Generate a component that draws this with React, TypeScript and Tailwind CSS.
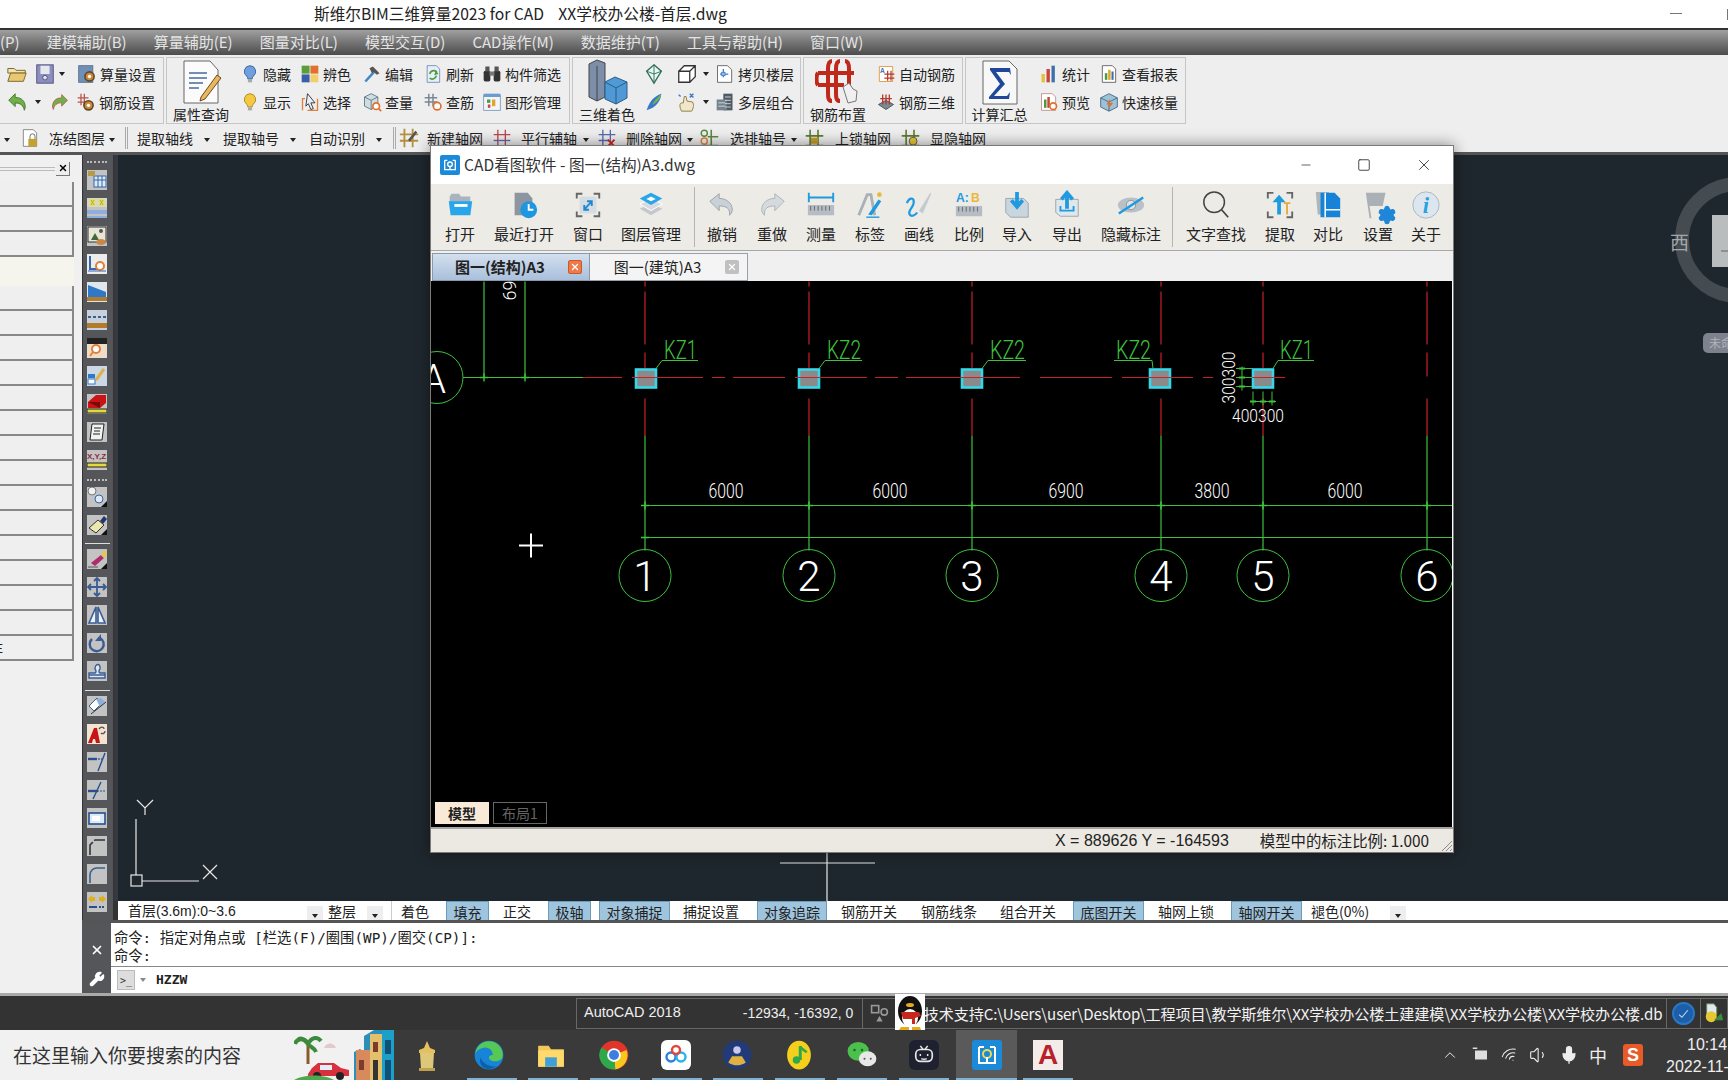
import type { ReactNode } from "react";
import { ChevronUp, Mic, Minus, Settings, Square, Volume1, Wifi, Wrench, X } from "lucide-react";

const cjk = "font-['Noto_Sans_CJK_SC','Liberation_Sans',sans-serif]";

const Ico = ({ c = "w-5 h-5", v = "0 0 24 24", children }: { c?: string; v?: string; children: ReactNode }) => (
  <svg viewBox={v} className={`${c} shrink-0`}>
    {children}
  </svg>
);

const Arrow = () => <span className="inline-block align-middle w-0 h-0 border-x-[3px] border-x-transparent border-t-[4px] border-t-[#222] shrink-0" />;

// small ribbon icons
const ribbon: Record<string, ReactNode> = {
  folder: (<><path d="M2 6h7l2 2h10v3H2z" fill="#f5e3a8" stroke="#75602a" /><path d="M2 20l3-9h17l-3 9z" fill="#e8c873" stroke="#75602a" /></>),
  save: (<><rect x="3" y="2" width="18" height="20" fill="#8c8fbd" stroke="#4d4f7a" /><rect x="7" y="3" width="10" height="9" fill="#e6e6ee" /><circle cx="12" cy="16" r="2.5" fill="#e6e6ee" stroke="#4d4f7a" /></>),
  gearDoc: (<><rect x="2" y="2" width="17" height="20" fill="#6f8fb8" stroke="#5b6d88" /><circle cx="15" cy="15" r="5.5" fill="#d0883a" stroke="#5f4a28" strokeWidth="2" /><circle cx="15" cy="15" r="2" fill="#fff" /></>),
  undo: (<path d="M3 10l7-7v4c7 0 11 4 11 11l-1 3c-1-5-4-8-10-8v4z" fill="#6fb04a" stroke="#3f7428" />),
  redo: (<path d="M21 10l-7-7v4c-7 0-11 4-11 11l1 3c1-5 4-8 10-8v4z" fill="#6fb04a" stroke="#c0463a" strokeWidth=".8" />),
  rebarGear: (<><path d="M6 2v14M10 2v14M2 7h13M2 12h13" stroke="#b5544a" strokeWidth="1.5" /><circle cx="15" cy="16" r="5.5" fill="#d0883a" stroke="#5f4a28" strokeWidth="2" /><circle cx="15" cy="16" r="2" fill="#fff" /></>),
  bulbBlue: (<><path d="M12 2a7 7 0 0 1 4 12.6c-1 1-1.4 2.4-1.4 3.4h-5.2c0-1-.4-2.4-1.4-3.4A7 7 0 0 1 12 2z" fill="#6f9fdc" stroke="#345a94" /><rect x="9.5" y="18.5" width="5" height="3.5" fill="#aaa" /></>),
  bulbYellow: (<><path d="M12 2a7 7 0 0 1 4 12.6c-1 1-1.4 2.4-1.4 3.4h-5.2c0-1-.4-2.4-1.4-3.4A7 7 0 0 1 12 2z" fill="#f5c842" stroke="#a5801c" /><rect x="9.5" y="18.5" width="5" height="3.5" fill="#aaa" /></>),
  palette: (<><rect x="2" y="2" width="9.5" height="9.5" fill="#5a9e3c" /><rect x="12.5" y="2" width="9.5" height="9.5" fill="#e0702c" /><rect x="2" y="12.5" width="9.5" height="9.5" fill="#3a5fa8" /><rect x="12.5" y="12.5" width="9.5" height="9.5" fill="#f2cf6a" /></>),
  hammer: (<><path d="M4 21L14 10" stroke="#3d88c8" strokeWidth="3" /><path d="M9 5l4-2 8 8-3 2-4-3-2 1z" fill="#555" /></>),
  refresh: (<><path d="M5 2h11l4 4v16H5z" fill="#e7eefa" stroke="#6b84ad" /><path d="M8 12a5 5 0 0 1 8-3l-1 3 3-1M16 14a5 5 0 0 1-8 3" fill="none" stroke="#4f9a3c" strokeWidth="2" /></>),
  binoc: (<><rect x="2" y="8" width="8" height="13" rx="2" fill="#333" /><rect x="14" y="8" width="8" height="13" rx="2" fill="#333" /><rect x="4" y="3" width="5" height="6" fill="#555" /><rect x="15" y="3" width="5" height="6" fill="#555" /><rect x="9" y="9" width="6" height="5" fill="#777" /></>),
  select: (<><path d="M3 22V8h3M21 8v14H9" fill="none" stroke="#e0803a" strokeWidth="1.6" /><path d="M9 2l9 11h-5l3 7-3 1-3-7-3 3z" fill="#e8eef6" stroke="#222" /></>),
  boxQ: (<><path d="M3 6l8-4 8 4v11l-8 4-8-4z" fill="#cfdde2" stroke="#56707c" /><path d="M3 6l8 4 8-4M11 10v11" stroke="#56707c" fill="none" /><circle cx="17" cy="17" r="4" fill="#fff" stroke="#e0702c" strokeWidth="2" /><path d="M20 20l3 3" stroke="#e0702c" strokeWidth="2" /></>),
  rebarQ: (<><path d="M7 2v15M12 2v15M2 7h15M2 12h15" stroke="#7a8796" strokeWidth="1.8" /><circle cx="17" cy="17" r="4.5" fill="#fff" stroke="#e0702c" strokeWidth="2" /></>),
  chart: (<><rect x="2" y="4" width="20" height="18" fill="#f2f5fa" stroke="#7a95b8" /><rect x="2" y="2" width="20" height="4" fill="#6c9bd0" /><rect x="6" y="9" width="4" height="4" fill="#4f9a3c" /><rect x="12" y="9" width="4" height="8" fill="#e0a52c" /><rect x="7" y="15" width="3" height="4" fill="#c8463a" /></>),
  copyFloor: (<><path d="M3 2h12l5 5v15H3z" fill="#fff" stroke="#555" /><path d="M10 6v10M6 12h10" stroke="#3d78c8" strokeWidth="1.5" /><rect x="8" y="10" width="4" height="4" fill="#9cc2ec" stroke="#3d78c8" /></>),
  building: (<><rect x="10" y="2" width="11" height="20" fill="#4d5a63" /><rect x="2" y="9" width="12" height="13" fill="#74838c" /><path d="M12 6h7M12 10h7M12 14h7M12 18h7M4 13h8M4 17h8" stroke="#dfe5e8" /></>),
  autoRebar: (<><path d="M4 3h16v18H4z" fill="#fff" stroke="#e0902c" /><path d="M14 8v12M18 8v12M10 12h12M10 17h12" stroke="#b5382c" strokeWidth="1.5" /><text x="5" y="11" fontSize="8" fontWeight="700" fill="#2f6fb5">A</text></>),
  rebar3d: (<><path d="M3 15l9-5 9 5-9 6z" fill="#7a8a96" stroke="#444" /><path d="M8 3v12M12 3v12M16 3v12M5 8h14" stroke="#b5382c" strokeWidth="1.6" /></>),
  bars: (<><rect x="3" y="12" width="4" height="10" fill="#e3c23c" /><rect x="9" y="6" width="4" height="16" fill="#c8463a" /><rect x="15" y="2" width="4" height="20" fill="#3c6fae" /></>),
  report: (<><path d="M4 2h12l4 4v16H4z" fill="#fff" stroke="#555" /><rect x="7" y="11" width="3" height="8" fill="#4f9a3c" /><rect x="11" y="7" width="3" height="12" fill="#e0a52c" /><rect x="15" y="9" width="2.5" height="10" fill="#3c6fae" /></>),
  preview: (<><path d="M3 2h13l4 4v16H3z" fill="#fff" stroke="#b88" /><rect x="6" y="9" width="3" height="10" fill="#4f9a3c" /><rect x="10" y="6" width="3" height="13" fill="#c8463a" /><circle cx="17" cy="17" r="4" fill="#fff" stroke="#e0702c" strokeWidth="2" /></>),
  quick: (<><path d="M2 7l10-5 10 5v11l-10 5-10-5z" fill="#9cc2d8" stroke="#3d6178" /><path d="M2 7l10 5 10-5M12 12v11" fill="none" stroke="#3d6178" /><path d="M13 8l-4 7h4l-2 6 6-8h-4z" fill="#e0702c" /></>),
  gem: (<><path d="M12 2l8 7-8 13-8-13z" fill="#eaf6f2" stroke="#30705c" strokeWidth="1.5" /><path d="M4 9l8 3 8-3M12 2v20" stroke="#30705c" fill="none" /></>),
  cubeLine: (<><path d="M3 9h12v12H3zM3 9l6-6h12v12l-6 6M15 9l6-6" fill="#fff" stroke="#333" strokeWidth="1.4" /></>),
  orbit: (<><path d="M4 21c3-10 8-15 16-18-1 9-6 15-16 18z" fill="#3d78c8" /><path d="M10 15c2-4 5-7 10-12-1 5-4 9-10 12z" fill="#6dbb3c" /></>),
  hand: (<><path d="M6 22c-3-6-2-10 2-9l1-7 2 0 1 5 6 1c2 3 1 7-1 10z" fill="#f0e6c8" stroke="#8a7a4a" /><path d="M3 4l2 2M15 3l4 4M19 3l-4 4" stroke="#3d78c8" strokeWidth="1.5" /></>),
};

const RibItem = ({ i, t, c = "" }: { i: string; t: string; c?: string }) => (
  <div className={`flex items-center gap-[3px] ${c}`}>
    <Ico>{ribbon[i]}</Ico>
    <span>{t}</span>
  </div>
);

const Group = ({ c, children }: { c: string; children: ReactNode }) => (
  <div className={`flex h-[67px] border border-[#c6c6c6] mr-[2px] shrink-0 ${c}`}>{children}</div>
);

const Big = ({ t, c, children }: { t: string; c: string; children: ReactNode }) => (
  <div className={`flex flex-col items-center shrink-0 ${c}`}>
    <div className="h-[48px] flex items-center justify-center">{children}</div>
    <span className="leading-[16px]">{t}</span>
  </div>
);

const Rows = ({ children }: { children: ReactNode }) => <div className="flex flex-col justify-center gap-[7px] pb-[5px] [&>div]:h-[21px] [&>div]:flex [&>div]:items-center">{children}</div>;

const axes = [645, 809, 972, 1161, 1263, 1427];
const bubbles = ["1", "2", "3", "4", "5", "6"];
const columns = [635, 798, 961, 1149, 1252];
const dims = [["6000", 726], ["6000", 890], ["6900", 1066], ["3800", 1212], ["6000", 1345]] as const;
const kz = [
  ["KZ1", 663, 698, 656],
  ["KZ2", 826, 862, 819],
  ["KZ2", 989, 1026, 982],
  ["KZ2", 1115, 1152, 1150],
  ["KZ1", 1279, 1314, 1273],
] as const;
const red = "#c8202c";
const green = "#3ec23e";
const thin = "font-['Roboto','Liberation_Sans',sans-serif] font-light";

function Drawing() {
  return (
    <svg viewBox="431 281 1021 545" className="w-full h-full block">
      {/* axes */}
      {axes.map((x) => (
        <g key={x}>
          <path d={`M${x} 281V286M${x} 291V344M${x} 352V${x === 1427 ? 376 : 368}`} stroke={red} strokeWidth="1.2" />
          <path d={`M${x} 398V435`} stroke={red} strokeWidth="1.2" />
          <path d={`M${x} 435V550`} stroke={green} strokeWidth="1.2" />
          <circle cx={x} cy="575" r="26" fill="none" stroke={green} strokeWidth="1" />
          <path d={`M${x - 4} 505h8M${x} 501v8`} stroke={green} strokeWidth="1.6" />
        </g>
      ))}
      <path d="M583 377H622M632 377H703M712 377H725M733 377H785M795 377H867M875 377H898M906 377H1020M1040 377H1112M1122 377H1147M1172 377H1193M1203 377H1213M1240 377H1285" stroke={red} strokeWidth="1.1" />
      {/* left axis A */}
      <path d="M463 377H583M484 281V377M525 281V377" stroke={green} strokeWidth="1.2" />
      <path d="M480 377h8M521 377h8M484 373v8M525 373v8" stroke={green} strokeWidth="1.4" />
      <circle cx="437" cy="377" r="26" fill="none" stroke={green} />
      <text x="421" y="392" className={thin} fontSize="40" fill="#fff">A</text>
      <text transform="translate(516 300) rotate(-90)" className={thin} fontSize="18" fill="#fff">69</text>
      {/* dimension lines */}
      <path d="M645 505H1452M645 537H1452" stroke={green} strokeWidth="1.2" />
      <path d="M641 537h8" stroke={green} strokeWidth="1.6" />
      {dims.map(([t, x], i) => (
        <text key={i} x={x} y="497" textAnchor="middle" className={thin} fontSize="20" textLength="35" lengthAdjust="spacingAndGlyphs" fill="#fff">{t}</text>
      ))}
      {bubbles.map((t, i) => (
        <text key={t} x={axes[i]} y="590" textAnchor="middle" className={thin} fontSize="42" fill="#fff">{t}</text>
      ))}
      {/* columns */}
      {columns.map((x) => (
        <g key={x}>
          <rect x={x + 1} y="369" width="20" height="18" fill="#8a8a8a" stroke="#35d8ea" strokeWidth="2.6" />
          <path d={`M${x - 3} 377h28`} stroke={red} strokeWidth="1" />
        </g>
      ))}
      {kz.map(([t, a, b, l]) => (
        <g key={a}>
          <text x={a + 1} y="358" className={thin} fontSize="25" textLength={b - a - 2} lengthAdjust="spacingAndGlyphs" fill={green}>{t}</text>
          <path d={t === "KZ2" && a === 1115 ? `M${a - 1} 360H${b}L${l + 3} 368` : `M${l} 368L${a - 1} 360H${b}`} stroke={green} fill="none" />
        </g>
      ))}
      {/* column 5 small dims */}
      <path d="M1242 366V390M1236 368h16M1236 377h16M1236 386h16M1253 391V405M1263 391V405M1272 391V405M1250 401H1276" stroke={green} strokeWidth="1" />
      <path d="M1239 368h6M1239 377h6M1239 386h6M1250 401h6M1260 401h6M1269 401h6" stroke={green} strokeWidth="2" />
      <text x="1232" y="421" className={thin} fontSize="19" textLength="52" lengthAdjust="spacingAndGlyphs" fill="#fff">400300</text>
      <text transform="translate(1235 403) rotate(-90)" className={thin} fontSize="19" textLength="52" lengthAdjust="spacingAndGlyphs" fill="#fff">300300</text>
      {/* cursor */}
      <path d="M519 545H543M531 533V557" stroke="#fff" strokeWidth="2" />
    </svg>
  );
}

// CAD viewer toolbar
const viewerTools: { t: string; w: string; sep?: boolean; i: ReactNode }[] = [
  { t: "打开", w: "w-[58px]", i: (<><path d="M5 7l2-3h8l2 3h10v6H5z" fill="#a9b4bf" /><path d="M4 12h25l-2 15H6z" fill="#27a6ec" /><rect x="10" y="15" width="14" height="3" fill="#fff" /></>) },
  { t: "最近打开", w: "w-[70px]", i: (<><path d="M6 3h14l5 6v18H6z" fill="#8d96a0" /><circle cx="21" cy="21" r="9" fill="#1f96e0" /><path d="M21 15v6h5" stroke="#fff" strokeWidth="2" fill="none" /></>) },
  { t: "窗口", w: "w-[58px]", i: (<><path d="M4 9V4h6M22 4h6v5M28 23v5h-6M10 28H4v-5" stroke="#666" strokeWidth="2" fill="none" /><rect x="7" y="7" width="18" height="18" fill="#d6dde2" /><path d="M12 21l8-9M15 12h5v5M12 16v5h5" stroke="#1f86d0" strokeWidth="2" fill="none" /></>) },
  { t: "图层管理", w: "w-[68px] mr-[9px]", sep: true, i: (<><path d="M16 14l12 6-12 7-12-7z" fill="#c4c8cc" /><path d="M16 9l12 6-12 7-12-7z" fill="#d8dbde" stroke="#fff" /><path d="M16 3l12 6-12 7-12-7z" fill="#29a5e8" /><path d="M16 7l5 2.5-5 2.5-5-2.5z" fill="#fff" /></>) },
  { t: "撤销", w: "w-[52px]", i: (<path d="M3 12L13 4v5c8 0 14 5 14 12 0 3-2 5-3 6 1-7-3-10-11-10v5z" fill="#c9d0d6" stroke="#9aa4ac" />) },
  { t: "重做", w: "w-[48px]", i: (<path d="M29 12L19 4v5c-8 0-14 5-14 12 0 3 2 5 3 6-1-7 3-10 11-10v5z" fill="#d5dade" stroke="#aab2b9" />) },
  { t: "测量", w: "w-[50px]", i: (<><path d="M3 3v10M29 3v10M4 8h24" stroke="#1f9ae0" strokeWidth="2" /><rect x="2" y="16" width="28" height="11" fill="#b5bcc3" /><path d="M5 17v5M9 17v5M13 17v5M17 17v5M21 17v5M25 17v5" stroke="#666" /></>) },
  { t: "标签", w: "w-[48px]", i: (<><path d="M4 27L13 5h4l4 22" fill="none" stroke="#a9b0b6" strokeWidth="3" /><path d="M14 26L25 10l3 2-10 15z" fill="#1f9ae0" /><path d="M12 29h14" stroke="#1f9ae0" strokeWidth="1.5" /><circle cx="26" cy="5" r="2.5" fill="#e8b93c" /></>) },
  { t: "画线", w: "w-[50px]", i: (<><path d="M3 14c3-7 9-6 7 1-2 6-6 7-4 11 2 3 6 1 8-2" fill="none" stroke="#1f9ae0" strokeWidth="2.4" /><path d="M16 22L28 3l1 1-9 21z" fill="#c3cad0" /></>) },
  { t: "比例", w: "w-[50px]", i: (<><text x="2" y="13" fontSize="13" fontWeight="700" fill="#1f9ae0" fontFamily="Liberation Sans">A:</text><text x="18" y="13" fontSize="13" fontWeight="700" fill="#e8b93c" fontFamily="Liberation Sans">B</text><rect x="2" y="17" width="28" height="11" fill="#b5bcc3" /><path d="M5 18v5M9 18v5M13 18v5M17 18v5M21 18v5M25 18v5" stroke="#666" /></>) },
  { t: "导入", w: "w-[46px]", i: (<><path d="M4 9h19l5 5v15H9l-5-5z" fill="#c9d6de" stroke="#9aa4ac" /><path d="M16 2v13M10 11l6 7 6-7" stroke="#1f9ae0" strokeWidth="4" fill="none" /></>) },
  { t: "导出", w: "w-[54px]", i: (<><path d="M4 10h24v18H9l-5-4z" fill="#dfe7ec" stroke="#9aa4ac" /><path d="M16 20V5M10 10l6-7 6 7" stroke="#1f9ae0" strokeWidth="4" fill="none" /><path d="M9 17v5h14v-5" stroke="#1f9ae0" strokeWidth="2" fill="none" /></>) },
  { t: "隐藏标注", w: "w-[74px] mr-[4px]", sep: true, i: (<><ellipse cx="16" cy="16" rx="14" ry="8" fill="#b9c0c6" /><circle cx="16" cy="16" r="5" fill="#dfe3e6" stroke="#8b949b" /><path d="M3 25L29 8" stroke="#1f9ae0" strokeWidth="2.6" /></>) },
  { t: "文字查找", w: "w-[84px]", i: (<><circle cx="14" cy="13" r="11" fill="none" stroke="#444" strokeWidth="1.6" /><path d="M22 21l7 8" stroke="#444" strokeWidth="1.8" /></>) },
  { t: "提取", w: "w-[44px]", i: (<><path d="M3 9V3h6M23 3h6v6M29 23v6h-6M9 29H3v-6" stroke="#666" strokeWidth="2" fill="none" /><path d="M13 26V13H8l7-8 7 8h-5v13z" fill="#1f9ae0" /><path d="M20 14h7M23.5 14v12" stroke="#e8a93c" strokeWidth="2" /></>) },
  { t: "对比", w: "w-[52px]", i: (<><path d="M3 2h14v24H5z" fill="#aeb5bb" /><path d="M8 3h15l6 6v20H8z" fill="#1683d8" /><path d="M13 3v26M13 21h16" stroke="#fff" strokeWidth="1.6" /></>) },
  { t: "设置", w: "w-[48px]", i: (<path d="M3 3h21l-3 14H7l2 13H7z" fill="#a9b0b6" />) },
  { t: "关于", w: "w-[48px]", i: (<><circle cx="16" cy="16" r="14" fill="#dbe6ee" stroke="#a9b6bf" /><text x="16" y="25" textAnchor="middle" fontSize="24" fontStyle="italic" fontWeight="700" fontFamily="Liberation Serif" fill="#2aa0e0">i</text></>) },
];

function Viewer() {
  return (
    <div className={`absolute left-[430px] top-[145px] w-[1024px] h-[708px] flex flex-col bg-white border border-[#7a7a7a] shadow-[0_0_14px_rgba(0,0,0,0.45)] text-[#222] ${cjk}`}>
      <div className="h-[38px] flex items-center pl-[9px] shrink-0">
        <div className="w-[20px] h-[20px] bg-[#1b8ad8] rounded-[2px] flex items-center justify-center">
          <Ico c="w-[16px] h-[16px]"><path d="M4 5h4M16 5h4M4 5v14h16V5" fill="none" stroke="#fff" strokeWidth="2" /><circle cx="12" cy="11" r="3.5" fill="none" stroke="#fff" strokeWidth="2" /><path d="M12 13v5" stroke="#fff" strokeWidth="2" /></Ico>
        </div>
        <span className="ml-[4px] text-[15.6px] text-[#333]">CAD看图软件 - 图一(结构)A3.dwg</span>
        <div className="ml-auto flex items-center text-[#222]">
          <Minus className="w-[14px] h-[14px] mr-[44px]" strokeWidth={1.2} />
          <Square className="w-[14px] h-[14px] mr-[44px]" strokeWidth={1.4} />
          <X className="w-[18px] h-[18px] mr-[20px]" strokeWidth={1.1} />
        </div>
      </div>
      <div className="h-[67px] flex items-stretch bg-[#ecebe6] border-b border-[#a8a8a8] shrink-0">
        {viewerTools.map((b) => (
          <div key={b.t} className="contents">
            <div className={`flex flex-col items-center shrink-0 ${b.w}`}>
              <div className="h-[42px] flex items-center justify-center relative">
                <Ico c="w-[30px] h-[30px]" v="0 0 32 32">{b.i}</Ico>
                {b.t === "设置" && <Settings className="absolute right-[-4px] bottom-[1px] w-[20px] h-[20px] text-[#1f86d8] fill-[#1f86d8]" strokeWidth={2} />}
              </div>
              <span className="text-[15px] leading-[16px]">{b.t}</span>
            </div>
            {b.sep && <div className="w-px bg-[#b5b5b5] my-[3px] h-[60px] shrink-0 mr-[1px]" />}
          </div>
        ))}
      </div>
      <div className="h-[30px] flex items-end bg-[#f0f0f0] pl-[1px] shrink-0">
        <div className="w-[158px] h-[28px] flex items-center justify-center relative border border-[#8b98a8] bg-gradient-to-b from-[#d3e0ef] to-[#a9bfdb] text-[15px] font-bold pr-[22px]">
          图一(结构)A3
          <span className="absolute right-[7px] top-[6px] w-[14px] h-[14px] rounded-[2px] bg-[#ee7a4a] border border-[#c95a2c] flex items-center justify-center"><X className="w-[10px] h-[10px] text-white" strokeWidth={3} /></span>
        </div>
        <div className="w-[158px] h-[28px] flex items-center justify-center relative border border-l-0 border-[#9aa0a8] bg-[#f4f4f4] text-[15px] pr-[22px]">
          图一(建筑)A3
          <span className="absolute right-[8px] top-[6px] w-[14px] h-[14px] rounded-[2px] bg-[#c0c0c0] flex items-center justify-center"><X className="w-[10px] h-[10px] text-white" strokeWidth={3} /></span>
        </div>
      </div>
      <div className="flex-1 relative bg-black overflow-hidden mr-px">
        <Drawing />
        <div className="absolute left-[4px] bottom-[3px] flex gap-[4px] text-[14px]">
          <span className="w-[54px] h-[22px] flex items-center justify-center bg-[#f9ead8] font-bold text-[#222]">模型</span>
          <span className="w-[54px] h-[22px] flex items-center justify-center border border-[#666] text-[#666]">布局1</span>
        </div>
      </div>
      <div className="h-[25px] flex items-center bg-[#ece9e3] border-t-2 border-[#a5a5a5] relative shrink-0 pt-[1px]">
        <span className="ml-[624px] text-[16px] font-['Liberation_Sans',sans-serif]">X = 889626 Y = -164593</span>
        <span className="ml-[31px] text-[15.4px]">模型中的标注比例: 1.000</span>
        <Ico c="w-[14px] h-[14px] absolute right-0 bottom-0" v="0 0 14 14"><path d="M13 3L3 13M13 7L7 13M13 11L11 13" stroke="#8a8a8a" /></Ico>
      </div>
    </div>
  );
}

// vertical tool strip
const T = ({ children }: { children: ReactNode }) => (
  <div className="w-[20px] h-[20px] bg-[#c3c3c3] mb-[8px] shrink-0">
    <Ico c="w-[20px] h-[20px]" v="0 0 20 20">{children}</Ico>
  </div>
);
const blue = "#3a5c94";
const tools1 = [
  (<><rect x="7" y="6" width="12" height="11" fill="#dfe8f4" stroke="#2f68a8" /><path d="M7 10h12M11 6v11M15 6v11" stroke="#2f68a8" /><rect x="1" y="1" width="7" height="5" fill="#b59a4a" /></>),
  (<><rect width="20" height="9" fill="#d8d8c0" /><path d="M4 2l3 5M7 2L4 7M13 2l3 5M16 2l-3 5" stroke="#222" /><rect x="3" y="1" width="5" height="7" fill="#e8e23c" opacity=".7" /><rect x="12" y="1" width="5" height="7" fill="#e8e23c" opacity=".7" /><rect y="12" width="20" height="4" fill="#8eaede" /><rect y="18" width="20" height="2" fill="#8eaede" /></>),
  (<><rect x="1" y="1" width="18" height="15" fill="#e6e6d6" stroke="#333" /><path d="M4 14l4-7 4 7z" fill="#44663c" /><circle cx="14" cy="5" r="2" fill="#555" /><ellipse cx="14" cy="16" rx="5" ry="3" fill="#c9884a" /></>),
  (<><rect width="20" height="20" fill="#ececea" /><path d="M3 2v13h7" stroke="#3566b0" strokeWidth="2" fill="none" /><circle cx="13" cy="12" r="4" fill="#fff" stroke="#e0803a" strokeWidth="2" /><path d="M1 17h18" stroke="#3566b0" /></>),
  (<><rect width="20" height="20" fill="#dfe6ee" /><path d="M1 3l18 7v5H1z" fill="#2f78c8" /><rect y="15" width="20" height="4" fill="#b07c2c" /></>),
  (<><rect width="20" height="20" fill="#c9d2dc" /><path d="M1 7h18" stroke="#36608f" strokeWidth="2" strokeDasharray="3 2" /><rect y="13" width="20" height="5" fill="#b07c2c" /></>),
  (<><rect width="20" height="20" fill="#ecdcc8" /><rect width="20" height="6" fill="#222" /><circle cx="9" cy="11" r="4" fill="#fff" stroke="#e0803a" strokeWidth="2" /><path d="M6 14l-3 4" stroke="#e0803a" strokeWidth="2" /></>),
  (<><rect width="20" height="20" fill="#cdd8e6" /><rect x="1" y="8" width="7" height="4" fill="#2f78c8" /><rect x="1" y="13" width="7" height="5" fill="#fff" stroke="#2f78c8" /><path d="M9 14l8-11" stroke="#e0b04a" strokeWidth="3" /></>),
  (<><path d="M1 8l8-7h10v8l-6 5H1z" fill="#c81414" /><path d="M1 8h12v6" fill="#7a0a0a" /><rect y="15" width="20" height="4" fill="#e4d83c" stroke="#222" /></>),
  (<path d="M5 2h12l-2 16H3zM7 6h7M7 9h6M6 12h7" fill="#f2f2f2" stroke="#222" />),
  (<><text x="0" y="9" fontSize="8" fontWeight="700" fontFamily="Liberation Sans" fill="#8a2a3a">X,Y,Z</text><rect y="13" width="20" height="4" fill="#e4d83c" stroke="#222" /></>),
];
const tools2a = [
  (<><circle cx="5" cy="4" r="4" fill="#f0f0f0" stroke="#777" /><circle cx="12" cy="12" r="4" fill="#dfe8f4" stroke="#2f68a8" /><path d="M14 20l6-6v6z" fill="#111" /></>),
  (<><path d="M2 13L11 5l6 5-8 8z" fill="#ece8b0" stroke="#333" /><path d="M13 6l4-5 3 3-4 5z" fill="#27356e" /><path d="M14 20l6-6v6z" fill="#111" /></>),
];
const tools3 = [
  (<><path d="M4 14L14 6l3 3-9 8z" fill="#b02c6c" /><path d="M14 6l4-5 2 3-3 5z" fill="#e8c84a" /><path d="M1 18h10" stroke="#555" /><path d="M14 20l6-6v6z" fill="#111" /></>),
  (<path d="M10 1v18M1 10h18M7 4l3-3 3 3M7 16l3 3 3-3M4 7l-3 3 3 3M16 7l3 3-3 3" stroke={blue} strokeWidth="1.8" fill="none" />),
  (<path d="M9 2v16H2zM11 2v16h7z" fill="#eef2f8" stroke={blue} strokeWidth="1.6" />),
  (<><path d="M5 6a7 7 0 1 0 8-1" fill="none" stroke={blue} strokeWidth="2.4" /><path d="M14 1v7H8z" fill={blue} /></>),
  (<path d="M2 17v-5h5c3 0 2-3 1-4 0-6 6-6 5 0-1 1-2 4 1 4h4v5zM2 14h16" fill="#dfe8f4" stroke={blue} strokeWidth="1.4" />),
];
const tools4 = [
  (<><path d="M2 10l8-8 5 5-8 8z" fill="#fff" stroke="#36608f" /><path d="M9 3l5-1 4 4-5 5z" fill="#8eaede" /><path d="M4 18L19 6" stroke="#333" /></>),
  (<><rect width="20" height="20" fill="#f2e4d0" /><path d="M1 19l6-15h3l3 15h-4l-1-4H6l-1 4z" fill="#c81414" /><path d="M12 5c2-3 5-2 5 0M18 7c0 3-3 3-4 2" stroke="#555" strokeWidth="1.4" fill="none" /></>),
  (<><path d="M1 7h9" stroke="#27508c" strokeWidth="2.4" /><path d="M11 7h4" stroke="#5a7cb0" strokeDasharray="2 1" strokeWidth="2" /><path d="M18 1L11 19" stroke="#27508c" strokeWidth="1.4" /></>),
  (<><path d="M1 11h18" stroke="#27508c" strokeWidth="1" strokeDasharray="2 1" /><path d="M1 11h10" stroke="#27508c" strokeWidth="2.4" /><path d="M14 2L6 19" stroke="#27508c" strokeWidth="1.4" /></>),
  (<><rect x="2" y="5" width="16" height="11" fill="#dbe8f6" stroke="#27508c" strokeWidth="1.6" /><path d="M5 8h8v5H5z" fill="#fff" /></>),
  (<path d="M3 19V9l5-5h10" fill="none" stroke="#333" strokeWidth="1.6" strokeDasharray="14 2" />),
  (<path d="M3 19V11c0-4 3-7 7-7h8" fill="none" stroke="#36608f" strokeWidth="1.6" />),
  (<><path d="M1 7l4-4v2h3v4H5v2zM19 7l-4-4v2h-3v4h3v2z" fill="#e0b01c" /><path d="M2 15h8" stroke="#27508c" strokeWidth="2" /><path d="M12 15h6" stroke="#27508c" strokeWidth="2" strokeDasharray="2 1" /></>),
];

const Grip = () => <div className="w-[20px] h-[3px] mb-[3px] border-t-2 border-dotted border-[#bbb]" />;
const Rule = () => <div className="w-[25px] h-px bg-[#ddd] mb-[6px] ml-[-2px]" />;

const statusBtns: { t: string; on?: boolean; w: string }[] = [
  { t: "着色", w: "w-[46px]" },
  { t: "填充", on: true, w: "w-[43px] ml-[8px]" },
  { t: "正交", w: "w-[50px] ml-[3px]" },
  { t: "极轴", on: true, w: "w-[43px] ml-[6px]" },
  { t: "对象捕捉", on: true, w: "w-[71px] ml-[8px]" },
  { t: "捕捉设置", w: "w-[70px] ml-[6px]" },
  { t: "对象追踪", on: true, w: "w-[70px] ml-[11px]" },
  { t: "钢筋开关", w: "w-[70px] ml-[7px]" },
  { t: "钢筋线条", w: "w-[70px] ml-[10px]" },
  { t: "组合开关", w: "w-[70px] ml-[9px]" },
  { t: "底图开关", on: true, w: "w-[71px] ml-[10px]" },
  { t: "轴网上锁", w: "w-[70px] ml-[7px]" },
  { t: "轴网开关", on: true, w: "w-[71px] ml-[10px]" },
];

const DropBox = () => (
  <span className="w-[16px] h-[14px] self-end bg-[#eeeeee] flex items-end justify-center pb-[2px] shrink-0"><Arrow /></span>
);

const Under = ({ c }: { c: string }) => <span className={`absolute bottom-0 h-[2px] bg-[#7fb2d6] ${c}`} />;

const panelRows = Array.from({ length: 15 }, (_, i) => i);

export default function App() {
  return (
    <div className={`relative w-[1728px] h-[1080px] overflow-hidden flex flex-col bg-[#333] text-[14px] text-[#222] ${cjk}`}>
      {/* title */}
      <div className="h-[30px] bg-white flex items-center border-b-2 border-[#333] pl-[314px] text-[15.7px] shrink-0 relative">
        <span className="whitespace-pre">斯维尔BIM三维算量2023 for CAD    XX学校办公楼-首层.dwg</span>
        <span className="absolute left-[1670px] top-[13px] w-[12px] h-px bg-[#777]" />
        <span className="absolute left-[1727px] top-[9px] w-px h-[11px] bg-[#777]" />
      </div>
      {/* menu */}
      <div className="h-[25px] bg-gradient-to-b from-[#a0a0a0] to-[#4c4c4c] text-[#e4e4e4] flex items-center gap-[27px] shrink-0 text-[15px]">
        {["(P)", "建模辅助(B)", "算量辅助(E)", "图量对比(L)", "模型交互(D)", "CAD操作(M)", "数据维护(T)", "工具与帮助(H)", "窗口(W)"].map((m) => (
          <span key={m}>{m}</span>
        ))}
      </div>
      {/* ribbon */}
      <div className="h-[69px] bg-[#eeeeee] flex pt-[2px] shrink-0 text-[14px]">
        <Group c="w-[164px] border-l-0 pl-[6px]">
          <Rows>
            <div><Ico c="w-[22px] h-[22px] mr-[6px]">{ribbon.folder}</Ico><Ico c="w-[22px] h-[22px] mr-[3px]">{ribbon.save}</Ico><Arrow /><span className="w-[12px]" /><RibItem i="gearDoc" t="算量设置" /></div>
            <div><Ico c="w-[22px] h-[22px] mr-[7px]">{ribbon.undo}</Ico><Arrow /><span className="w-[9px]" /><Ico c="w-[20px] h-[20px] mr-[6px]">{ribbon.redo}</Ico><RibItem i="rebarGear" t="钢筋设置" /></div>
          </Rows>
        </Group>
        <Group c="w-[404px]">
          <Big t="属性查询" c="w-[70px] pr-[2px]">
            <Ico c="w-[44px] h-[46px]" v="0 0 44 46"><path d="M5 2h26l8 9v33H5z" fill="#fbfbfb" stroke="#666" /><path d="M10 14h18M10 19h18M10 24h14M10 29h10" stroke="#4a6a9c" strokeWidth="1.5" /><path d="M22 38l16-22 4 3-16 21-5 2z" fill="#e8b860" stroke="#6b4a1c" /></Ico>
          </Big>
          <div className="flex items-center pl-[3px]">
            <div className="w-[60px]"><Rows><div><RibItem i="bulbBlue" t="隐藏" /></div><div><RibItem i="bulbYellow" t="显示" /></div></Rows></div>
            <div className="w-[62px]"><Rows><div><RibItem i="palette" t="辨色" /></div><div><RibItem i="select" t="选择" /></div></Rows></div>
            <div className="w-[61px]"><Rows><div><RibItem i="hammer" t="编辑" /></div><div><RibItem i="boxQ" t="查量" /></div></Rows></div>
            <div className="w-[59px]"><Rows><div><RibItem i="refresh" t="刷新" /></div><div><RibItem i="rebarQ" t="查筋" /></div></Rows></div>
            <div><Rows><div><RibItem i="binoc" t="构件筛选" /></div><div><RibItem i="chart" t="图形管理" /></div></Rows></div>
          </div>
        </Group>
        <Group c="w-[229px]">
          <Big t="三维着色" c="w-[66px] ml-[1px]">
            <Ico c="w-[44px] h-[48px]" v="0 0 44 48"><path d="M4 6l8-4 8 3v34l-8 4-8-4z" fill="#7d8ea8" stroke="#444" /><path d="M12 8v35" stroke="#444" /><path d="M20 24l10-5 12 5v16l-11 6-11-5z" fill="#4f9ad6" stroke="#2c5c86" /><path d="M20 24l11 6 11-6M31 30v16" stroke="#2c5c86" fill="none" /></Ico>
          </Big>
          <div className="flex items-center">
            <div className="w-[36px] pl-[3px]"><Rows><div><Ico c="w-[22px] h-[22px]">{ribbon.gem}</Ico></div><div><Ico c="w-[22px] h-[22px]">{ribbon.orbit}</Ico></div></Rows></div>
            <div className="w-[39px]"><Rows><div><Ico c="w-[22px] h-[22px] mr-[5px]">{ribbon.cubeLine}</Ico><Arrow /></div><div><Ico c="w-[22px] h-[22px] mr-[5px]">{ribbon.hand}</Ico><Arrow /></div></Rows></div>
            <Rows><div><RibItem i="copyFloor" t="拷贝楼层" /></div><div><RibItem i="building" t="多层组合" /></div></Rows>
          </div>
        </Group>
        <Group c="w-[160px]">
          <Big t="钢筋布置" c="w-[70px] pr-[2px]">
            <Ico c="w-[46px] h-[46px]" v="0 0 46 46"><path d="M17 2c-4 0-4 5-4 8v24c0 4 0 8 4 8M25 2c-4 0-4 5-4 8v24c0 4 0 8 4 8M30 2c4 0 4 5 4 8v16M3 14h36M3 26h26M3 14c-2 2-2 10 0 12" fill="none" stroke="#c0281c" strokeWidth="4" /><path d="M28 28l6-4 4 6 4 2-1 10-8 2z" fill="#f0f0f0" stroke="#777" /></Ico>
          </Big>
          <div className="flex items-center pl-[2px]"><Rows><div><RibItem i="autoRebar" t="自动钢筋" /></div><div><RibItem i="rebar3d" t="钢筋三维" /></div></Rows></div>
        </Group>
        <Group c="w-[221px]">
          <Big t="计算汇总" c="w-[72px] ml-[1px] pr-[7px]">
            <Ico c="w-[38px] h-[47px]" v="0 0 38 47"><path d="M2 2h26l8 8v35H2z" fill="#f8f8f8" stroke="#666" /><path d="M9 9h20l1 7-2-3H15l9 12-11 12h13l3-4-1 7H8v-2l11-13L9 11z" fill="#20479c" /></Ico>
          </Big>
          <div className="flex items-center">
            <div className="w-[60px]"><Rows><div><RibItem i="bars" t="统计" /></div><div><RibItem i="preview" t="预览" /></div></Rows></div>
            <Rows><div><RibItem i="report" t="查看报表" /></div><div><RibItem i="quick" t="快速核量" /></div></Rows>
          </div>
        </Group>
      </div>
      {/* toolbar */}
      <div className="h-[28px] bg-[#eeeeee] flex items-center shrink-0 whitespace-nowrap">
        <span className="ml-[4px]"><Arrow /></span>
        <Ico c="w-[20px] h-[22px] ml-[10px]"><path d="M4 2h12l4 4v16H4z" fill="#fff" stroke="#777" /><rect x="10" y="13" width="10" height="9" fill="#c4a02c" /><path d="M12 13v-3a3 3 0 0 1 6 0v3" stroke="#555" fill="none" /></Ico>
        <span className="ml-[9px]">冻结图层</span>
        <span className="ml-[4px]"><Arrow /></span>
        <span className="ml-[10px] w-[3px] h-[22px] border-x border-[#aaa]" />
        <span className="ml-[9px]">提取轴线</span>
        <span className="ml-[11px]"><Arrow /></span>
        <span className="ml-[13px]">提取轴号</span>
        <span className="ml-[11px]"><Arrow /></span>
        <span className="ml-[13px]">自动识别</span>
        <span className="ml-[11px]"><Arrow /></span>
        <span className="ml-[11px] w-[3px] h-[22px] border-x border-[#aaa]" />
        <Ico c="w-[22px] h-[22px] ml-[2px]"><path d="M7 2v20M16 2v20M2 8h20M2 15h20" stroke="#b5903c" strokeWidth="2" /><path d="M11 14l8-10 2 2-8 10z" fill="#555" /></Ico>
        <span className="ml-[7px]">新建轴网</span>
        <Ico c="w-[20px] h-[20px] ml-[9px]"><path d="M7 2v20M16 2v20M2 8h20" stroke="#c0464a" strokeWidth="1.6" /><path d="M2 15h20" stroke="#5a6ab0" strokeWidth="1.6" /></Ico>
        <span className="ml-[9px]">平行辅轴</span>
        <span className="ml-[6px]"><Arrow /></span>
        <Ico c="w-[20px] h-[20px] ml-[8px]"><path d="M7 2v20M16 2v14M2 8h20M2 15h12" stroke="#5a6ab0" strokeWidth="1.6" /><path d="M13 14l8 8M21 14l-8 8" stroke="#d0241c" strokeWidth="2.4" /></Ico>
        <span className="ml-[9px]">删除轴网</span>
        <span className="ml-[5px]"><Arrow /></span>
        <Ico c="w-[21px] h-[21px] ml-[6px]"><path d="M14 2v20M2 20h20M10 10h12" stroke="#5a8a3c" strokeWidth="1.8" /><circle cx="6" cy="6" r="3.5" fill="none" stroke="#5a8a3c" strokeWidth="1.6" /><circle cx="6" cy="15" r="3.5" fill="none" stroke="#e0803a" strokeWidth="1.6" /></Ico>
        <span className="ml-[10px]">选排轴号</span>
        <span className="ml-[5px]"><Arrow /></span>
        <Ico c="w-[21px] h-[21px] ml-[7px]"><path d="M7 2v20M16 2v20M2 9h20M2 20h20" stroke="#5a7a2c" strokeWidth="1.8" /><rect x="8" y="11" width="8" height="7" fill="#c4a02c" /></Ico>
        <span className="ml-[10px]">上锁轴网</span>
        <Ico c="w-[21px] h-[21px] ml-[9px]"><path d="M7 2v20M16 2v20M2 9h20M2 20h20" stroke="#5a7a2c" strokeWidth="1.8" /><circle cx="15" cy="15" r="4.5" fill="#e8c832" stroke="#555" /></Ico>
        <span className="ml-[9px]">显隐轴网</span>
      </div>
      {/* main */}
      <div className="h-[841px] flex shrink-0">
        <div className="w-[82px] bg-[#f0f0f0] flex flex-col shrink-0 border-t-[3px] border-[#555] pr-[8px]">
          <div className="h-[27px] flex items-center shrink-0">
            <div className="flex-1 h-[4px] border-y border-[#bbb]" />
            <span className="w-[14px] h-[14px] ml-[1px] mr-[4px] bg-[#eee] border-r border-b border-[#777] flex items-center justify-center"><X className="w-[10px] h-[10px] text-black" strokeWidth={3.5} /></span>
          </div>
          {[0, 1, 2].map((r) => (
            <div key={r} className="h-[25px] bg-[#efefef] border-r-2 border-b-2 border-[#888] shrink-0" />
          ))}
          <div className="h-[29px] bg-[#f5f5ee] shrink-0" />
          {panelRows.map((r) => (
            <div key={r} className="h-[25px] bg-[#efefef] border-r-2 border-b-2 border-[#888] shrink-0 flex items-center overflow-hidden">
              {r === 14 && <span className="ml-[-4px] text-[12px]">E</span>}
            </div>
          ))}
        </div>
        <div className="flex-1 flex flex-col min-w-0">
          <div className="h-[768px] flex border-t-[3px] border-[#555] shrink-0">
            <div className="w-[32px] bg-[#55565a] border-x border-[#333] flex flex-col items-start pl-[4px] pt-[3px] shrink-0">
              <div className="mt-[3px]"><Grip /></div>
              <div className="h-[7px]" />
              {tools1.map((t, i) => <T key={i}>{t}</T>)}
              <div className="h-[2px]" />
              <Grip />
              <div className="h-[7px]" />
              {tools2a.map((t, i) => <T key={i}>{t}</T>)}
              <Rule />
              {tools3.map((t, i) => <T key={i}>{t}</T>)}
              <div className="h-[1px]" />
              <Rule />
              {tools4.map((t, i) => <T key={i}>{t}</T>)}
            </div>
            <div className="flex-1 flex flex-col min-w-0">
              <div className="h-[746px] flex shrink-0">
                <div className="w-[4px] bg-[#343a3f] shrink-0" />
                <div className="flex-1 bg-[#1f272e] relative">
                  <svg viewBox="118 155 1610 746" className="absolute inset-0 w-full h-full">
                    <path d="M136 819V875M142 881H199M137 800L145 808L153 800M145 808V815M203 865l14 14M217 865l-14 14M780 863H875M827 853V901" stroke="#e8e8e8" fill="none" strokeWidth="1.2" />
                    <rect x="131" y="875" width="11" height="11" fill="none" stroke="#e8e8e8" strokeWidth="1.2" />
                    <circle cx="1738" cy="240" r="56" fill="none" stroke="#444b51" strokeWidth="14" />
                    <rect x="1712" y="215" width="30" height="52" fill="#b9bdbd" />
                    <path d="M1721 251H1728" stroke="#666" />
                  </svg>
                  <span className="absolute left-[1552px] top-[73px] text-[19px] text-[#a5a8aa]">西</span>
                  <span className="absolute left-[1585px] top-[178px] w-[60px] h-[20px] rounded-[5px] bg-[#7e828e] text-[#b2b4ba] text-[12px] pl-[6px] leading-[20px]">未命名</span>
                </div>
              </div>
              <div className="h-[19px] bg-white flex shrink-0 overflow-hidden text-[14px] leading-[20px] whitespace-nowrap ml-[4px]">
                <span className="w-[189px] pl-[10px] shrink-0 font-['Liberation_Sans','Noto_Sans_CJK_SC',sans-serif]">首层(3.6m):0~3.6</span>
                <DropBox />
                <span className="ml-[5px] mr-[11px]">整层</span>
                <DropBox />
                <span className="w-[9px] border-r border-[#ccc] shrink-0" />
                {statusBtns.map((b) => (
                  <span key={b.t} className={`shrink-0 h-[19px] flex justify-center ${b.w} ${b.on ? "bg-[#9fc5de] border-x border-t border-[#6c9cbc]" : ""}`}>{b.t}</span>
                ))}
                <span className="ml-[9px] w-[79px] shrink-0">褪色(0%)</span>
                <DropBox />
              </div>
            </div>
          </div>
          <div className="h-[3px] bg-[#555] shrink-0" />
          <div className="h-[70px] flex shrink-0">
            <div className="w-[29px] bg-[#55565a] flex flex-col items-center justify-end pb-[6px] gap-[14px] shrink-0">
              <X className="w-[14px] h-[14px] text-white" strokeWidth={3} />
              <Wrench className="w-[16px] h-[16px] text-white fill-white" />
            </div>
            <div className="flex-1 bg-white flex flex-col">
              <div className="h-[44px] pl-[3px] pt-[6px] text-[14.3px] leading-[18px] text-[#222] font-['DejaVu_Sans_Mono','Noto_Sans_CJK_SC',monospace] border-b border-[#888] shrink-0">
                <div>命令: 指定对角点或 [栏选(F)/圈围(WP)/圈交(CP)]:</div>
                <div>命令:</div>
              </div>
              <div className="flex-1 flex items-center pl-[6px]">
                <span className="w-[18px] h-[20px] bg-[#ddd] border border-[#bbb] text-[10px] text-[#333] flex items-center justify-center font-['DejaVu_Sans_Mono',monospace]">&gt;_</span>
                <span className="ml-[5px] mr-[4px] flex items-center"><span className="inline-block w-0 h-0 border-x-[3px] border-x-transparent border-t-[4px] border-t-[#888]" /></span>
                <span className="ml-[6px] font-bold text-[13px] font-['DejaVu_Sans_Mono',monospace] text-[#222]">HZZW</span>
              </div>
            </div>
          </div>
        </div>
      </div>
      {/* autocad status */}
      <div className="h-[37px] bg-[#333] border-t-[3px] border-[#aaa] flex items-center shrink-0 pl-[576px] text-white whitespace-nowrap">
        <div className="h-[31px] flex items-center flex-1 border border-[#686868] text-[#eee]">
          <span className="ml-[7px] text-[14.5px] font-['Liberation_Sans',sans-serif]">AutoCAD 2018</span>
          <span className="ml-[62px] w-[117px] text-[14px] font-['Liberation_Sans',sans-serif]">-12934, -16392, 0</span>
          <span className="ml-[2px] w-px h-full bg-[#686868]" />
          <Ico c="w-[19px] h-[19px] ml-[7px]"><rect x="2" y="2" width="9" height="9" fill="none" stroke="#999" strokeWidth="2" /><circle cx="18" cy="10" r="4" fill="none" stroke="#999" strokeWidth="2" /><path d="M8 22l4-7 4 7z" fill="#999" /></Ico>
          <Ico c="w-[30px] h-[36px] ml-[6px] mt-[-2px]" v="0 0 30 36">
            <rect width="30" height="36" fill="#fff" />
            <ellipse cx="15" cy="17" rx="12" ry="15" fill="#111" />
            <ellipse cx="15" cy="24" rx="8" ry="9" fill="#fff" />
            <path d="M6 18h18l2 4-6 2v6h-3v-5H8z" fill="#c8281c" />
            <ellipse cx="15" cy="11" rx="4" ry="2" fill="#e8a81c" />
            <path d="M6 33h8v3H4zM17 33h8l1 3H17z" fill="#e8a81c" />
          </Ico>
          <span className="text-[15.1px] text-[#f2f2f2] tracking-[-0.1px] ml-[-1px]">技术支持C:\Users\user\Desktop\工程项目\教学斯维尔\XX学校办公楼土建建模\XX学校办公楼\XX学校办公楼.db</span>
          <span className="ml-auto w-px h-full bg-[#686868]" />
          <span className="mx-[5px] w-[23px] h-[23px] rounded-full bg-[#1d5ea8] border-2 border-[#2878c8] flex items-center justify-center shrink-0"><Ico c="w-[13px] h-[13px]"><path d="M4 14l5 5L20 6" stroke="#bcd8f5" strokeWidth="2" fill="none" /></Ico></span>
          <span className="w-px h-full bg-[#686868]" />
          <Ico c="w-[22px] h-[26px] mx-[2px]"><path d="M4 2h8l3 4v8H4z" fill="#dfe8f4" stroke="#5a8a3c" /><circle cx="9" cy="16" r="6" fill="#e8c832" /><path d="M12 20l8-8 2 8z" fill="#3c8a3c" /></Ico>
        </div>
      </div>
      {/* taskbar */}
      <div className="h-[50px] bg-[#3a3a3a] flex items-center relative shrink-0">
        <div className="w-[394px] h-full bg-[#f1f1f1] flex items-center pl-[13px] text-[19px] text-[#333] relative overflow-hidden shrink-0">
          在这里输入你要搜索的内容
          <Ico c="absolute right-0 top-0 w-[100px] h-[50px]" v="0 0 100 50">
            <path d="M60 50V22l6-3 4 3V6l10-6h20v50z" fill="#2b8fb8" />
            <rect x="62" y="20" width="14" height="30" fill="#d98a5c" />
            <rect x="76" y="4" width="12" height="46" fill="#e4c06c" />
            <rect x="88" y="0" width="12" height="50" fill="#1ca0c8" />
            <rect x="65" y="30" width="5" height="10" fill="#7a3c2c" />
            <rect x="79" y="12" width="5" height="10" fill="#7a3c2c" />
            <rect x="79" y="30" width="5" height="20" fill="#333" />
            <rect x="91" y="10" width="6" height="14" fill="#0f4f78" />
            <rect x="91" y="30" width="6" height="20" fill="#0f4f78" />
            <path d="M14 34V14" stroke="#8a5a2c" strokeWidth="3" />
            <path d="M14 14C8 6 2 10 1 14M14 14c4-8 10-7 13-3M14 14c-2-5-8-7-10-4M14 14c2 3 6 3 8 8" stroke="#3c8a3c" strokeWidth="4" fill="none" />
            <path d="M30 18c2-6 10-6 12 0z" fill="#e4c8d0" />
            <path d="M14 44l4-6 6-5h16l7 5 8 2v6H14z" fill="#d8303c" />
            <rect x="26" y="35" width="12" height="5" fill="#dff0f8" />
            <circle cx="23" cy="46" r="4" fill="#222" />
            <circle cx="46" cy="46" r="4" fill="#222" />
            <path d="M0 50c10-6 30-6 40 0z" fill="#4fa84f" />
          </Ico>
        </div>
        <div className="absolute left-[414px] top-[11px]"><Ico c="w-[26px] h-[30px]" v="0 0 26 30"><path d="M13 0l3 7 5 2v3H5V9l5-2z" fill="#e4c060" /><path d="M6 12h14l-1 16H7z" fill="#dcc878" /><rect x="5" y="27" width="16" height="3" fill="#bfa050" /></Ico></div>
        <div className="absolute left-[474px] top-[10px]"><Ico c="w-[30px] h-[30px]"><circle cx="12" cy="12" r="11.5" fill="#1784d8" /><path d="M1 12a11 11 0 0 1 22 0c0 3-2 5-6 5-3 0-5-1-5-3 0-1 1-2 3-2 0-3-2-6-6-6-4 0-8 3-8 6z" fill="#56c856" /><path d="M10 23c-4-1-6-5-5-9 2 5 8 8 13 7a11 11 0 0 1-8 2z" fill="#0c5fa8" /></Ico></div>
        <div className="absolute left-[537px] top-[11px]"><Ico c="w-[28px] h-[28px]"><path d="M1 4h9l2 3h11v15H1z" fill="#f2c75c" /><path d="M1 8h22v14H1z" fill="#ffd96c" /><rect x="7" y="14" width="10" height="8" fill="#3f9fd6" /></Ico></div>
        <div className="absolute left-[599px] top-[10px]"><Ico c="w-[30px] h-[30px]"><circle cx="12" cy="12" r="11.5" fill="#e0352b" /><path d="M12 12L22 8a11.5 11.5 0 0 1-9 15.5z" fill="#f8c91c" /><path d="M12 12l1 11.5A11.5 11.5 0 0 1 2 6z" fill="#2ea84a" /><circle cx="12" cy="12" r="5.5" fill="#fff" /><circle cx="12" cy="12" r="4" fill="#3d7fe0" /></Ico></div>
        <div className="absolute left-[661px] top-[10px] w-[30px] h-[30px] rounded-[6px] bg-white flex items-center justify-center"><Ico c="w-[24px] h-[24px]"><circle cx="7" cy="14" r="4.5" fill="none" stroke="#2b7fe0" strokeWidth="2.4" /><circle cx="17" cy="14" r="4.5" fill="none" stroke="#28b4e8" strokeWidth="2.4" /><circle cx="12" cy="7" r="4" fill="none" stroke="#e0483c" strokeWidth="2.4" /></Ico></div>
        <div className="absolute left-[722px] top-[10px]"><Ico c="w-[30px] h-[30px]"><circle cx="12" cy="12" r="11.5" fill="#223a78" /><circle cx="12" cy="8" r="3" fill="#c8c8f0" /><path d="M5 18c4 3 10 3 14 0l-3-5H8z" fill="#e0b040" /></Ico></div>
        <div className="absolute left-[784px] top-[9px]"><Ico c="w-[30px] h-[32px]"><ellipse cx="12" cy="12" rx="9.5" ry="11.5" fill="#f4cf1c" /><path d="M13 5v11" stroke="#2ea84a" strokeWidth="2.4" /><circle cx="10" cy="16" r="3" fill="#2ea84a" /><path d="M13 5c1 3 4 3 5 5" stroke="#2ea84a" strokeWidth="2" fill="none" /></Ico></div>
        <div className="absolute left-[847px] top-[10px]"><Ico c="w-[30px] h-[30px]"><ellipse cx="9" cy="9" rx="8.5" ry="7.5" fill="#4cc04c" /><ellipse cx="16.5" cy="15" rx="7" ry="6" fill="#e8e8e8" /><circle cx="6" cy="8" r="1" fill="#1a6a1a" /><circle cx="12" cy="8" r="1" fill="#1a6a1a" /><circle cx="14" cy="15" r=".8" fill="#555" /><circle cx="19" cy="15" r=".8" fill="#555" /></Ico></div>
        <div className="absolute left-[909px] top-[10px] w-[30px] h-[30px] rounded-[6px] bg-[#1e2230] flex items-center justify-center"><Ico c="w-[22px] h-[22px]"><rect x="3" y="6" width="18" height="13" rx="5" fill="none" stroke="#e8e8e8" strokeWidth="1.8" /><path d="M8 2l3 4M16 2l-3 4M8 11v2M16 11v2M9 16c2 1 4 1 6 0" stroke="#e8e8e8" strokeWidth="1.6" fill="none" /></Ico></div>
        <div className="absolute left-[956px] top-0 w-[61px] h-full bg-[#5a5a5a] flex items-center justify-center"><div className="w-[30px] h-[30px] rounded-[3px] bg-[#1b8ad8] flex items-center justify-center"><Ico c="w-[24px] h-[24px]"><path d="M4 4h5M15 4h5M4 4v16h16V4" fill="none" stroke="#fff" strokeWidth="2" /><circle cx="12" cy="11" r="4" fill="none" stroke="#f2d84c" strokeWidth="2" /><path d="M12 14v6" stroke="#fff" strokeWidth="2" /></Ico></div></div>
        <div className="absolute left-[1033px] top-[10px] w-[30px] h-[30px] bg-[#f4ece8] flex items-center justify-center text-[#b8222c] text-[28px] font-bold font-['Liberation_Sans',sans-serif] leading-none">A</div>
        <Under c="left-[467px] w-[50px]" />
        <Under c="left-[528px] w-[50px]" />
        <Under c="left-[590px] w-[50px]" />
        <Under c="left-[652px] w-[50px]" />
        <Under c="left-[713px] w-[50px]" />
        <Under c="left-[775px] w-[50px]" />
        <Under c="left-[837px] w-[50px]" />
        <Under c="left-[899px] w-[50px]" />
        <Under c="left-[956px] w-[61px]" />
        <Under c="left-[1023px] w-[50px]" />
        <div className="ml-auto flex items-center gap-[10px] text-[#eee] pr-[6px] relative">
          <ChevronUp className="w-[18px] h-[18px] mr-[2px]" strokeWidth={1.3} />
          <Ico c="w-[20px] h-[18px]"><rect x="4" y="6" width="16" height="12" fill="#ddd" /><path d="M1 3h6" stroke="#ddd" strokeWidth="2" /></Ico>
          <Wifi className="w-[18px] h-[18px] rotate-[-30deg]" strokeWidth={1.4} />
          <Volume1 className="w-[20px] h-[20px]" strokeWidth={1.3} />
          <Mic className="w-[20px] h-[24px] fill-[#eee]" strokeWidth={1.5} />
          <span className="text-[18px]">中</span>
          <span className="ml-[6px] w-[20px] h-[22px] rounded-[3px] bg-[#e85a28] text-white font-bold text-[18px] leading-[22px] text-center font-['Liberation_Sans',sans-serif]">S</span>
          <div className="w-[62px] ml-[13px] mr-[-6px] overflow-hidden whitespace-nowrap text-[16px] leading-[21px] font-['Liberation_Sans',sans-serif] flex flex-col">
            <span className="pl-[21px]">10:14</span>
            <span className="mt-[1px]">2022-11-22</span>
          </div>
        </div>
      </div>
      <Viewer />
    </div>
  );
}
